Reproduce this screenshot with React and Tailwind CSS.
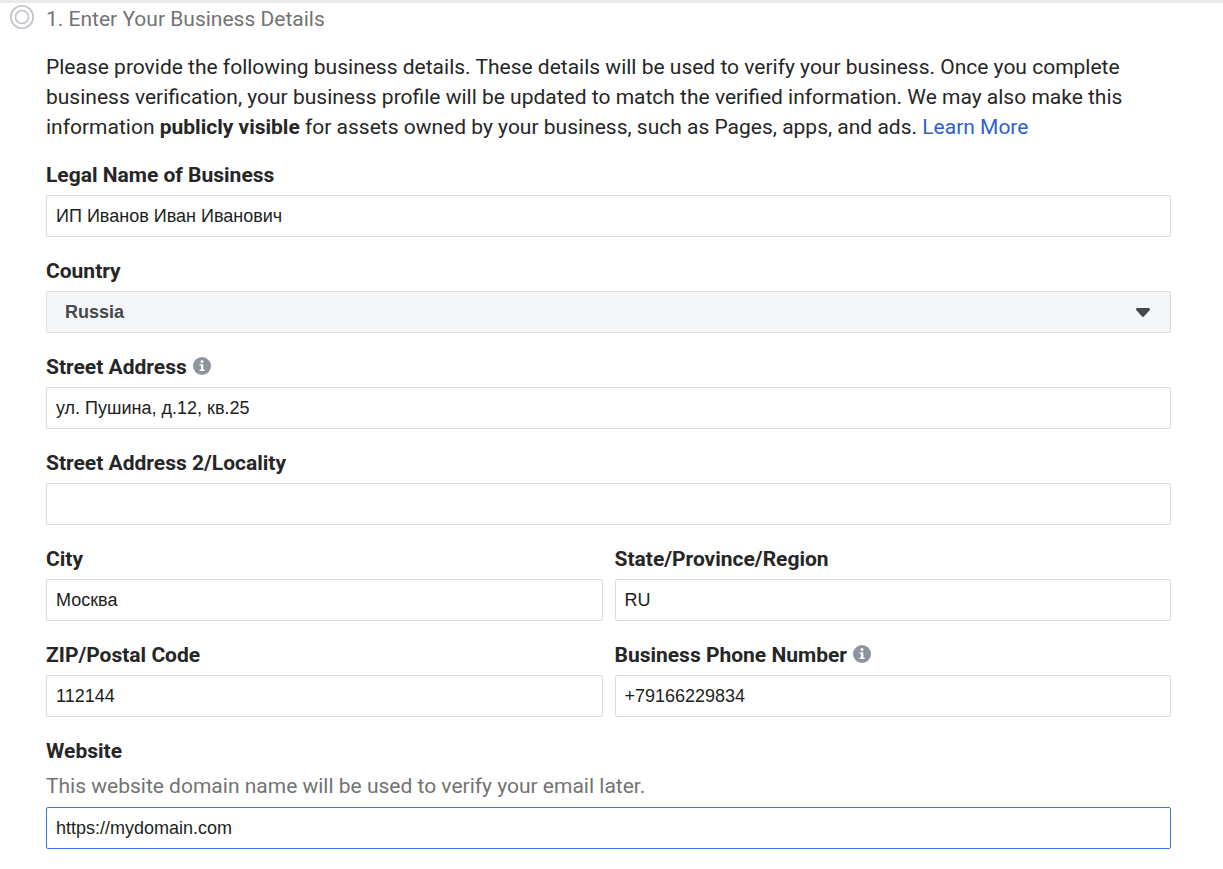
import { useState } from "react";

const inputClass =
  "block h-[42px] w-full rounded-xs border bg-white px-[9px] font-['Liberation_Sans',Arial,sans-serif] text-lg text-[#1c1e21] outline-none";

function StepIcon() {
  return (
    <svg
      className="mt-px size-6 shrink-0"
      viewBox="0 0 24 24"
      fill="none"
      stroke="#bec3c9"
      strokeWidth="1.6"
      aria-hidden="true"
    >
      <circle cx="12" cy="12" r="11.2" />
      <circle cx="12" cy="12" r="6.5" />
    </svg>
  );
}

function InfoIcon() {
  return (
    <svg className="mt-1 size-[18px]" viewBox="0 0 18 18" aria-hidden="true">
      <circle cx="9" cy="9" r="9" fill="#8d949e" />
      <circle cx="9" cy="4.5" r="1.5" fill="#fff" />
      <path d="M6.6 7.2h3.7v5.3h1.3V14H6.6v-1.5H8V8.7H6.6z" fill="#fff" />
    </svg>
  );
}

function Field({ id, label, info, hint, children }) {
  return (
    <div className="flex flex-col gap-1.5">
      <div className="flex items-start gap-1.5">
        <label htmlFor={id} className="font-bold leading-7">
          {label}
        </label>
        {info && <InfoIcon />}
      </div>
      {hint && (
        <p id={`${id}_hint`} className="text-[#737373]">
          {hint}
        </p>
      )}
      {children}
    </div>
  );
}

function TextField({ id, label, info, hint, value, onChange, type = "text", active }) {
  return (
    <Field id={id} label={label} info={info} hint={hint}>
      <input
        id={id}
        name={id}
        type={type}
        value={value}
        onChange={onChange}
        aria-describedby={hint ? `${id}_hint` : undefined}
        className={`${inputClass} ${active ? "border-[#3578e5]" : "border-[#dadde1] focus:border-[#3578e5]"}`}
      />
    </Field>
  );
}

export default function App() {
  const [data, setData] = useState({
    legal_name: "ИП Иванов Иван Иванович",
    country: "Russia",
    street: "ул. Пушина, д.12, кв.25",
    street2: "",
    city: "Москва",
    state: "RU",
    zip: "112144",
    phone: "+79166229834",
    website: "https://mydomain.com",
  });

  // Props shared by every text field
  const bind = (name) => ({
    id: name,
    value: data[name],
    onChange: (e) => setData({ ...data, [name]: e.target.value }),
  });

  return (
    <main className="min-h-screen border-t-3 border-[#ebebeb] bg-white pb-5 pt-px font-[Roboto,sans-serif] text-[21px] leading-[30px] text-[#262626]">
      {/* Step title */}
      <header className="flex items-start gap-3 pl-2.5">
        <StepIcon />
        <h1 className="text-[#737373]">1. Enter Your Business Details</h1>
      </header>

      <div className="pl-[46px] pr-[52px] pt-[18px]">
        <p>
          Please provide the following business details. These details will be
          used to verify your business. Once you complete business
          verification, your business profile will be updated to match the
          verified information. We may also make this information{" "}
          <strong className="font-bold">publicly visible</strong> for assets
          owned by your business, such as Pages, apps, and ads.{" "}
          <a href="#learn-more" className="text-[#2d5fd0] hover:underline">
            Learn More
          </a>
        </p>

        <form
          onSubmit={(e) => e.preventDefault()}
          className="mt-[19px] flex flex-col gap-5"
        >
          <TextField label="Legal Name of Business" {...bind("legal_name")} />

          {/* Country */}
          <Field id="country" label="Country">
            <div className="relative">
              <select
                id="country"
                name="country"
                value={data.country}
                onChange={(e) => setData({ ...data, country: e.target.value })}
                className="block h-[42px] w-full appearance-none rounded-xs border border-[#dadde1] bg-[#f5f6f7] px-[18px] font-['Liberation_Sans',Arial,sans-serif] text-lg font-bold text-[#444950] outline-none"
              >
                <option>Russia</option>
              </select>
              <svg
                className="pointer-events-none absolute inset-y-0 right-[21px] my-auto h-[9px] w-3.5"
                viewBox="0 0 14 9"
                fill="#444950"
                aria-hidden="true"
              >
                <path d="M1.2 0h11.6c1.1 0 1.6 1.4.8 2.2L8.2 8.3c-.7.8-1.7.8-2.4 0L.4 2.2C-.4 1.4.1 0 1.2 0z" />
              </svg>
            </div>
          </Field>

          <TextField label="Street Address" info {...bind("street")} />
          <TextField label="Street Address 2/Locality" {...bind("street2")} />

          <div className="grid grid-cols-2 gap-x-3 gap-y-5">
            <TextField label="City" {...bind("city")} />
            <TextField label="State/Province/Region" {...bind("state")} />
            <TextField label="ZIP/Postal Code" {...bind("zip")} />
            <TextField
              label="Business Phone Number"
              type="tel"
              info
              {...bind("phone")}
            />
          </div>

          <TextField
            label="Website"
            type="url"
            hint="This website domain name will be used to verify your email later."
            active
            {...bind("website")}
          />
        </form>
      </div>
    </main>
  );
}
